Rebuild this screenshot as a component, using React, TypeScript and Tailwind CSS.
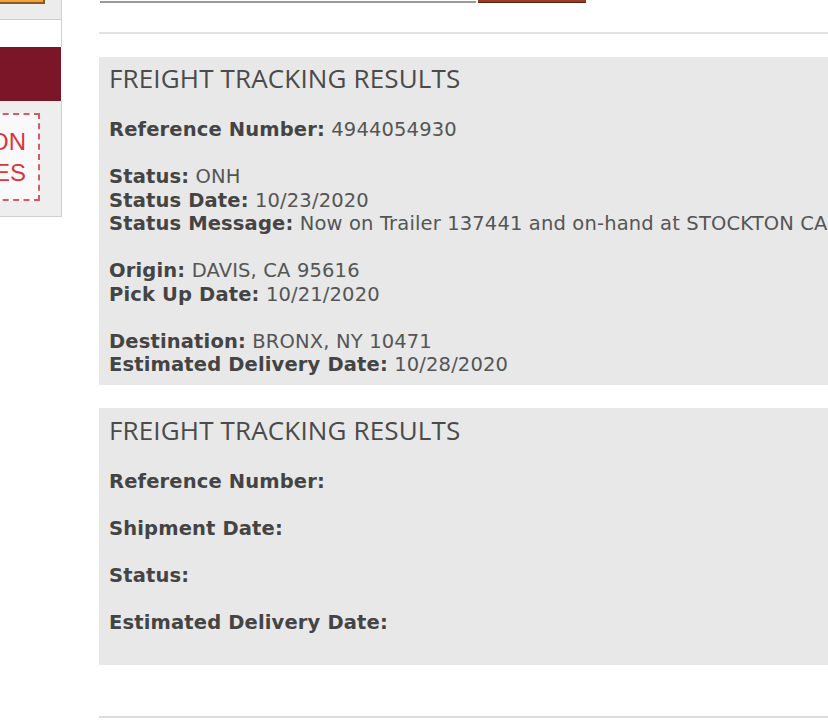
import React from "react";

const body = "font-['DejaVu_Sans',sans-serif]";

function Row({ label, value }: { label: string; value?: string }) {
  return (
    <div className="whitespace-nowrap">
      <span className="font-bold text-[#444]">{label}</span>
      {value ? <span className="text-[#555]"> {value}</span> : null}
    </div>
  );
}

function Heading() {
  return (
    <h2 className="font-['Open_Sans',sans-serif] font-medium text-[26px] leading-[30px] text-[#4a4a4a] uppercase">
      Freight Tracking Results
    </h2>
  );
}

export default function App() {
  return (
    <div className="w-[828px] h-[721px] overflow-hidden bg-white flex">
      {/* sidebar */}
      <aside className="w-[62px] shrink-0 flex flex-col">
        <div className="h-[20px] bg-[#ececec] border-r border-b border-[#cfcfcf]">
          <div className="h-[4px] w-[45px] bg-[#f2a33a] border-b-2 border-r-2 border-[#8a5a1e]" />
        </div>
        <div className="h-[27px] border-r border-[#cfcfcf]" />
        <div className="h-[54px] bg-[#7b1528] w-[61px]" />
        <div className="h-[116px] bg-[#eeeeee] border-r border-b border-[#cfcfcf] pt-[12px]">
          <div className="ml-[-60px] w-[100px] h-[88px] border-2 border-dashed border-[#d95a62] bg-[#f9f9f9] flex flex-col items-end justify-center pr-[12px] font-['Liberation_Sans',sans-serif] text-[24px] leading-[31px] text-[#d8363c]">
            <span>ON</span>
            <span>ES</span>
          </div>
        </div>
      </aside>

      {/* main */}
      <main className={`flex-1 pl-[37px] ${body}`}>
        <div className="flex items-start gap-[2px] ml-[1px]">
          <div className="w-[376px] h-[3px] border-b-2 border-[#999]" />
          <div className="w-[108px] h-[3px] bg-[#9b3b26] border-b border-[#5a2010]" />
        </div>
        <div className="mt-[29px] h-[2px] bg-[#e2e2e2] w-[740px]" />

        <section className="mt-[23px] w-[740px] bg-[#e8e8e8] pl-[10px] pt-[6px] h-[328px] text-[19.5px] leading-[23.5px] tracking-[0.15px]">
          <Heading />
          <div className="mt-[25px] flex flex-col gap-[23.5px]">
            <Row label="Reference Number:" value="4944054930" />
            <div>
              <Row label="Status:" value="ONH" />
              <Row label="Status Date:" value="10/23/2020" />
              <Row label="Status Message:" value="Now on Trailer 137441 and on-hand at STOCKTON CA" />
            </div>
            <div>
              <Row label="Origin:" value="DAVIS, CA 95616" />
              <Row label="Pick Up Date:" value="10/21/2020" />
            </div>
            <div>
              <Row label="Destination:" value="BRONX, NY 10471" />
              <Row label="Estimated Delivery Date:" value="10/28/2020" />
            </div>
          </div>
        </section>

        <section className="mt-[23px] w-[740px] bg-[#e8e8e8] pl-[10px] pt-[7px] h-[257px] text-[19.5px] leading-[23.5px] tracking-[0.15px]">
          <Heading />
          <div className="mt-[25px] flex flex-col gap-[23.5px]">
            <Row label="Reference Number:" />
            <Row label="Shipment Date:" />
            <Row label="Status:" />
            <Row label="Estimated Delivery Date:" />
          </div>
        </section>

        <div className="mt-[51px] h-[2px] bg-[#dcdcdc] w-[740px]" />
      </main>
    </div>
  );
}
